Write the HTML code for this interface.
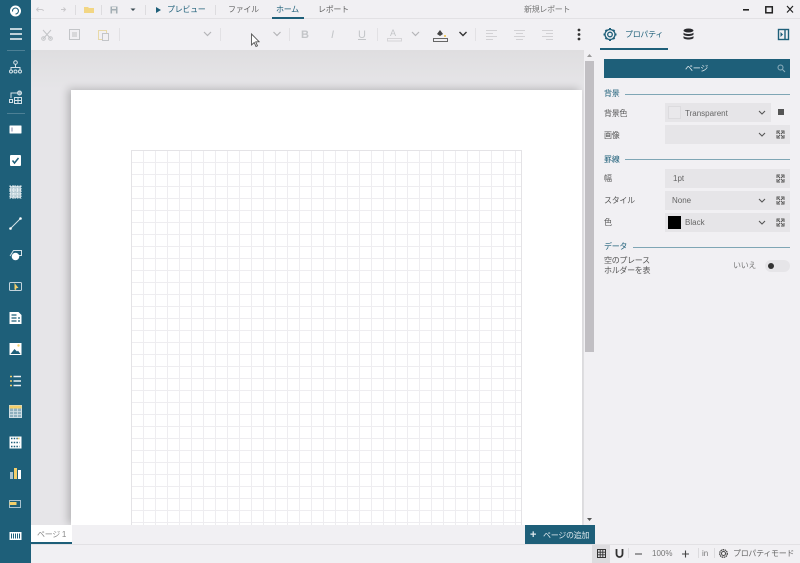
<!DOCTYPE html>
<html lang="ja"><head><meta charset="utf-8">
<style>
html,body{margin:0;padding:0}
body{width:800px;height:563px;position:relative;overflow:hidden;background:#f1f0f3;font-family:"Liberation Sans","Noto Sans CJK JP",sans-serif;color:#555}
.a{position:absolute}
.t{position:absolute;white-space:nowrap;line-height:14px;font-size:8px;letter-spacing:-.3px}
.l{letter-spacing:0}
.box{position:absolute;background:#e6e5e8;height:19px}
svg{position:absolute;overflow:visible}
</style></head><body>
<div class="a" style="left:31px;top:18px;width:769px;height:1px;background:#e2e1e4"></div>
<!-- canvas -->
<div class="a" style="left:31px;top:50px;width:553px;height:475px;background:linear-gradient(#dfdee0,#e6e5e8 40px)"></div>
<div class="a" style="left:71px;top:90px;width:511px;height:435px;background:#fff;box-shadow:-3px -1px 8px rgba(0,0,0,.22)"></div>
<div class="a" style="left:131px;top:150px;width:391px;height:375px;background-image:linear-gradient(to right,#eeedf0 1px,transparent 1px),linear-gradient(to bottom,#eeedf0 1px,transparent 1px);background-size:12px 12px;background-position:0 0;border:solid #e4e3e6;border-width:1px 1px 0 1px;box-sizing:border-box;background-origin:border-box"></div>
<!-- scrollbar -->
<div class="a" style="left:584px;top:50px;width:11px;height:475px;background:#f1f0f3"></div>
<div class="a" style="left:585px;top:61px;width:9px;height:291px;background:#c1bfc3"></div>
<svg style="left:586px;top:53px" width="7" height="5"><path d="M1 4L3.500 1L6 4Z" fill="#999"/></svg>
<svg style="left:586px;top:517px" width="7" height="5"><path d="M1 1L3.500 4L6 1Z" fill="#555"/></svg>
<!-- bottom bars -->
<div class="a" style="left:31px;top:525px;width:564px;height:19px;background:#f1f0f3"></div>
<div class="a" style="left:31px;top:544px;width:769px;height:1px;background:#e2e1e4"></div>
<div class="a" style="left:31px;top:525px;width:41px;height:17px;background:#fff;border-bottom:2px solid #1e5f79"></div>
<div class="t" style="left:37px;top:528px;color:#888">ページ 1</div>
<div class="a" style="left:525px;top:525px;width:70px;height:19px;background:#1e5f79"></div>
<div class="t l" style="left:530px;top:528px;font-size:11px;color:#dfe9ee;font-weight:bold">+</div>
<div class="t" style="left:543px;top:529px;color:#dfe9ee">ページの追加</div>
<!-- sidebar -->
<div class="a" style="left:0;top:0;width:31px;height:563px;background:#1e5f79"></div>
<div class="a" style="left:7px;top:50px;width:18px;height:1px;background:#4d8095"></div>
<div class="a" style="left:7px;top:113px;width:18px;height:1px;background:#4d8095"></div>
<svg style="left:0;top:0" width="31" height="563" fill="none" stroke="#fff">
<circle cx="15.500" cy="11" r="5.500" fill="#fff" stroke="none"/><path d="M12.500 11.500a3 3 0 1 1 3 2.500" stroke="#1e5f79" stroke-width="1.100"/>
<path d="M10 29h12M10 34h12M10 39h12" stroke-width="1.500" stroke="#f4f8fa"/>
<g stroke-width="1" stroke="#d5e2e8"><circle cx="15.500" cy="62.500" r="1.800"/><path d="M15.500 64v3M11 70v-2.500h9V70"/><circle cx="11" cy="71.500" r="1.500"/><circle cx="15.500" cy="71.500" r="1.500"/><circle cx="20" cy="71.500" r="1.500"/></g>
<g stroke="#d5e2e8"><path d="M11 98v-5h6"/><circle cx="19.500" cy="93" r="2" fill="#9fb9c5"/><rect x="9.500" y="99.500" width="3" height="3"/><rect x="14.500" y="97.500" width="7" height="6" fill="#1e5f79"/><path d="M18 97.500v6M14.500 100.500h7"/></g>
<rect x="9.500" y="125.500" width="12" height="8" rx=".5" fill="#fff" stroke="none"/><path d="M12 127.500v4" stroke="#88a" stroke-width="1"/>
<rect x="10" y="155" width="11" height="11" rx="1" fill="#fff" stroke="none"/><path d="M12.500 160.500l2 2.500 4-5" stroke="#1e5f79" stroke-width="1.500"/>
<rect x="10" y="186" width="11" height="12" fill="#b9cdd6" stroke="none"/><path d="M9.500 186h12M9.500 190h12M9.500 194h12M9.500 198h12M10 185.500v13M13.700 185.500v13M17.300 185.500v13M21 185.500v13" stroke="#f0f5f7" stroke-dasharray="1.500 1"/>
<path d="M11 228L20 219" stroke="#d5e2e8"/><circle cx="10.500" cy="228.500" r="1.300" fill="#fff" stroke="none"/><circle cx="20.500" cy="218.500" r="1.300" fill="#fff" stroke="none"/>
<path d="M10 256l3.500-5.500H21.500v5H18" stroke="#d5e2e8"/><circle cx="15.500" cy="256.500" r="3.800" fill="#fff" stroke="none"/>
<rect x="9.500" y="282.500" width="12" height="8" rx="1" stroke="#c3d4dc"/><path d="M14.500 283l4 5-2 0-.5 2-1.500-.5z" fill="#f3cf6a" stroke="none"/>
<path d="M9.500 312h9l3 3v9h-12z" fill="#fff" stroke="none"/><path d="M11.500 315h5M11.500 318h5M11.500 321h5M18 318h2M18 321h2" stroke="#1e5f79" stroke-width="1.200"/>
<rect x="9.500" y="343" width="12" height="12" fill="#fff" stroke="none"/><path d="M10.500 354l4-5 2.500 2.500 1-.9 2.500 3.400z" fill="#1e5f79" stroke="none"/><circle cx="18.500" cy="345.500" r="1.200" fill="#f3cf6a" stroke="none"/>
<path d="M10 376.500h2M10 381h2M10 385.500h2" stroke="#f3cf6a" stroke-width="1.500"/><path d="M13.500 376.500h7.500M13.500 381h7.500M13.500 385.500h7.500" stroke="#e8f0f3" stroke-width="1.500"/>
<rect x="9.500" y="405.500" width="12" height="12" fill="#8fb0bf" stroke="#cfdde3"/><rect x="9.500" y="405.500" width="12" height="3" fill="#f3cf6a" stroke="none"/><path d="M13.500 408.500v9M17.500 408.500v9M9.500 411.500h12M9.500 414.500h12" stroke="#d5e2e8" stroke-width=".8"/>
<rect x="9.500" y="436.500" width="12" height="12" fill="#fff" stroke="none"/><path d="M11 438.500h8.500M11 442.500h8.500M11 446.500h8.500" stroke="#1e5f79" stroke-width="1.500" stroke-dasharray="1.500 1.200"/><circle cx="18.500" cy="438.500" r=".9" fill="#f3cf6a" stroke="none"/>
<rect x="10" y="472" width="3" height="7" fill="#a9c3cf" stroke="none"/><rect x="14" y="468" width="3" height="11" fill="#f3cf6a" stroke="none"/><rect x="18" y="470" width="3" height="9" fill="#fff" stroke="none"/>
<rect x="9.500" y="500.500" width="11" height="7" fill="#1e5f79" stroke="#a9c3cf"/><rect x="9.500" y="502" width="7" height="3" fill="#f3cf6a" stroke="none"/>
<rect x="9.500" y="532" width="12" height="8" fill="#fff" stroke="none"/><path d="M11.500 533.500v5M13.500 533.500v5M15.500 533.500v5M17.500 533.500v5M19.500 533.500v5" stroke="#1e5f79" stroke-width="1"/>
</svg>
<!-- top menu -->
<svg style="left:0;top:0" width="800" height="50" fill="none">
<path d="M37 9.500h5M38.500 7.500l-2 2 2 2M43.500 11a2 2 0 0 0-1.500-1.500" stroke="#c9c8cb"/>
<path d="M65 9.500h-4M63.500 7.500l2 2-2 2" stroke="#c9c8cb"/>
<path d="M84 7h4l1 1h5v5h-10z" fill="#f2d684"/>
<rect x="110.500" y="6.500" width="7" height="7" fill="#a3aeb4"/><rect x="112" y="7" width="4" height="2" fill="#e8e8e8"/><rect x="112" y="10.500" width="4" height="3" fill="#e8e8e8"/>
<path d="M130.500 8.500h5l-2.500 2.500z" fill="#3b4a52"/>
<path d="M156 7v6l5-3z" fill="#1e5f79"/>
<path d="M75.500 5v10M101.500 5v10M145.500 5v10M215.500 5v10" stroke="#dddcdf"/>
<rect x="272" y="17" width="32" height="2" fill="#1e5f79"/>
<!-- toolbar -->
<g stroke="#c3c5c8"><path d="M43 30l8 9M51 30l-8 9"/><circle cx="43.500" cy="38.500" r="1.800"/><circle cx="50.500" cy="38.500" r="1.800"/>
<rect x="69.500" y="29.500" width="10" height="10"/><rect x="72" y="32" width="5" height="5" fill="#d8d8da" stroke="none"/>
<rect x="98.500" y="30.500" width="8" height="9" stroke="#e8d9a8"/><rect x="102.500" y="33.500" width="6" height="7" fill="#f1f0f3"/></g>
<path d="M119.500 28v13M220.500 28v13M289.500 28v13M377.500 28v13M475.500 28v13" stroke="#e2e1e4"/>
<path d="M204 32l3.500 3.500L211 32M273.500 32l3.500 3.500 3.500-3.500M412 32l3.500 3.500 3.500-3.500" stroke="#b5b5b8" stroke-width="1.200"/>
<path d="M459.500 32l3.500 3.500 3.500-3.500" stroke="#333" stroke-width="1.400"/>
<rect x="387.500" y="38.500" width="14" height="2.500" stroke="#d5d4d7"/>
<rect x="433.500" y="38.500" width="14" height="3" stroke="#666"/>
<path d="M437 34l3-4 3 4-3 2z" fill="#444"/><circle cx="445" cy="36" r="1" fill="#f0c040"/>
<path d="M486 30.500h11M486 33.500h7M486 36.500h11M486 39.500h7M514 30.500h11M516 33.500h7M514 36.500h11M516 39.500h7M542 30.500h11M546 33.500h7M542 36.500h11M546 39.500h7" stroke="#d2d1d4"/>
<circle cx="579" cy="30" r="1.400" fill="#333"/><circle cx="579" cy="34.500" r="1.400" fill="#333"/><circle cx="579" cy="39" r="1.400" fill="#333"/>
<g stroke="#1e5f79" stroke-width="1.300"><circle cx="610" cy="34.500" r="2.300"/><circle cx="610" cy="34.500" r="5"/><path d="M610 28v2M610 39v2M603.500 34.500h2M614.500 34.500h2M605.500 30l1.400 1.400M613.100 37.600l1.400 1.400M605.500 39l1.400-1.400M613.100 31.400l1.400-1.400" stroke-width="2"/></g>
<ellipse cx="688.500" cy="30.500" rx="5" ry="2" fill="#2a2a2e"/><path d="M683.500 32.500c1 2 9 2 10 0v2c-1 2-9 2-10 0zM683.500 36c1 2 9 2 10 0v2c-1 2-9 2-10 0z" fill="#2a2a2e"/>
<rect x="778.500" y="29.500" width="10" height="10" stroke="#1e5f79" stroke-width="1.400"/><path d="M785 29.500v10" stroke="#1e5f79" stroke-width="1.400"/><path d="M780.500 32v5l2.500-2.500z" fill="#1e5f79"/>
<rect x="600" y="48" width="68" height="2" fill="#1e5f79"/>
<!-- cursor -->
<path d="M251.500 34v11l2.700-2.500 1.800 4 1.500-.7-1.800-3.900 3.400-.2z" fill="#fff" stroke="#555" stroke-width=".9"/>
<!-- window -->
<rect x="743" y="9" width="6" height="1.600" fill="#222"/>
<rect x="765.800" y="6.800" width="6.500" height="6" stroke="#222" stroke-width="1.500"/>
<path d="M787 6l6 6.500M793 6l-6 6.500" stroke="#222" stroke-width="1.200"/>
</svg>
<div class="t" style="left:167px;top:3px;color:#1e5f79">プレビュー</div>
<div class="t" style="left:228px;top:3px;color:#666">ファイル</div>
<div class="t" style="left:276px;top:3px;color:#1e5f79">ホーム</div>
<div class="t" style="left:318px;top:3px;color:#666">レポート</div>
<div class="t" style="left:524px;top:3px;color:#777">新規レポート</div>
<div class="t l" style="left:301px;top:28px;font-size:11px;font-weight:bold;color:#c3c5c8">B</div>
<div class="t l" style="left:331px;top:28px;font-size:11px;font-style:italic;color:#c3c5c8">I</div>
<div class="t l" style="left:358px;top:28px;font-size:11px;text-decoration:underline;color:#c3c5c8">U</div>
<div class="t l" style="left:390px;top:26px;font-size:9px;color:#c3c5c8">A</div>
<div class="t" style="left:625px;top:28px;color:#1e5f79">プロパティ</div>
<!-- properties -->
<div class="a" style="left:604px;top:59px;width:186px;height:19px;background:#1e5f79"></div>
<div class="t" style="left:685px;top:62px;color:#e8eff2">ページ</div>
<svg style="left:776px;top:63px" width="10" height="10" fill="none" stroke="#8fb0bf"><circle cx="4.500" cy="4.500" r="2.500"/><path d="M6.500 6.500L9 9"/></svg>

<div class="t" style="left:604px;top:87px;color:#1e5f79">背景</div>
<div class="a" style="left:625px;top:94px;width:165px;height:1px;background:#7fa6b5"></div>
<div class="t" style="left:604px;top:107px">背景色</div>
<div class="box" style="left:665px;top:103px;width:106px"></div>
<div class="a" style="left:668px;top:106px;width:13px;height:13px;background:#e9e8eb;border:1px solid #dcdbde;box-sizing:border-box"></div>
<div class="t l" style="left:685px;top:107px;color:#666">Transparent</div>
<div class="a" style="left:778px;top:109px;width:6px;height:6px;background:#555"></div>
<div class="t" style="left:604px;top:129px">画像</div>
<div class="box" style="left:665px;top:125px;width:125px"></div>

<div class="t" style="left:604px;top:153px;color:#1e5f79">罫線</div>
<div class="a" style="left:625px;top:159px;width:165px;height:1px;background:#7fa6b5"></div>
<div class="t" style="left:604px;top:172px">幅</div>
<div class="box" style="left:665px;top:169px;width:125px"></div>
<div class="t l" style="left:673px;top:172px;color:#666">1pt</div>
<div class="t" style="left:604px;top:194px">スタイル</div>
<div class="box" style="left:665px;top:191px;width:125px"></div>
<div class="t l" style="left:672px;top:194px;color:#666">None</div>
<div class="t" style="left:604px;top:216px">色</div>
<div class="box" style="left:665px;top:213px;width:125px"></div>
<div class="a" style="left:668px;top:216px;width:13px;height:13px;background:#000"></div>
<div class="t l" style="left:685px;top:216px;color:#666">Black</div>

<div class="t" style="left:604px;top:240px;color:#1e5f79">データ</div>
<div class="a" style="left:633px;top:247px;width:157px;height:1px;background:#7fa6b5"></div>
<div class="t" style="left:604px;top:256px;line-height:10px;color:#555">空のプレース<br>ホルダーを表</div>
<div class="t" style="left:733px;top:259px;color:#777">いいえ</div>
<div class="a" style="left:765px;top:260px;width:25px;height:12px;border-radius:6px;background:#e6e5e8"></div>
<div class="a" style="left:768px;top:263px;width:6px;height:6px;border-radius:50%;background:#333"></div>
<svg style="left:0;top:0" width="800" height="300" fill="none" stroke="#555" stroke-width="1.100">
<path d="M759 111l3 3 3-3M759 133l3 3 3-3M759 199l3 3 3-3M759 221l3 3 3-3"/>
<g stroke-width="1"><path d="M777 134v-3h3M781 131h3v3M777 135v3h3M781 138h3v-3M778 132l2 2M783 132l-2 2M778 137l2-2M783 137l-2-2"/>
<path d="M777 178v-3h3M781 175h3v3M777 179v3h3M781 182h3v-3M778 176l2 2M783 176l-2 2M778 181l2-2M783 181l-2-2"/>
<path d="M777 200v-3h3M781 197h3v3M777 201v3h3M781 204h3v-3M778 198l2 2M783 198l-2 2M778 203l2-2M783 203l-2-2"/>
<path d="M777 222v-3h3M781 219h3v3M777 223v3h3M781 226h3v-3M778 220l2 2M783 220l-2 2M778 225l2-2M783 225l-2-2"/></g>
</svg>
<!-- status -->
<div class="a" style="left:592px;top:545px;width:18px;height:18px;background:#dddcdf"></div>
<svg style="left:0;top:0" width="800" height="563" fill="none" stroke="#333">
<rect x="597.500" y="549.500" width="8" height="8" stroke-width="1"/><path d="M600.200 549.500v8M602.800 549.500v8M597.500 552.200h8M597.500 554.800h8" stroke-width=".9"/>
<path d="M616.500 549v5a3 3 0 0 0 6 0v-5" stroke-width="1.800"/>
<path d="M628.500 548v10M698.500 548v10M714.500 548v10" stroke="#dcdbde"/>
<path d="M635 554h7M682 554h7M685.500 550.500v7" stroke="#444" stroke-width="1.100"/>
<circle cx="723.500" cy="553.500" r="2" stroke="#444" stroke-width="1"/><circle cx="723.500" cy="553.500" r="3.800" stroke="#444" stroke-width="1.300" stroke-dasharray="1.500 .6"/>
</svg>
<div class="t l" style="left:652px;top:547px;color:#777">100%</div>
<div class="t l" style="left:702px;top:547px;color:#777">in</div>
<div class="t" style="left:733px;top:547px;color:#666">プロパティモード</div>
</body></html>
